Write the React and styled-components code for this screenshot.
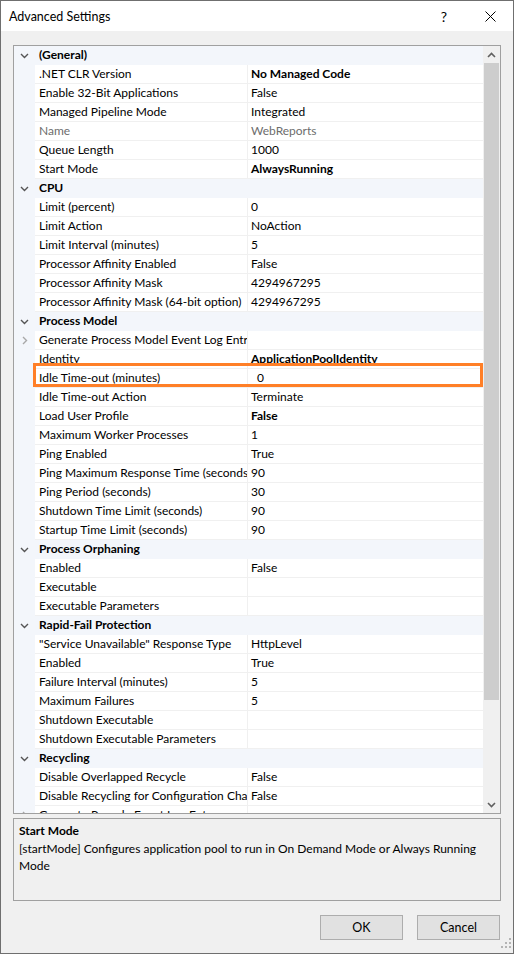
import React from "react";
import styled, { createGlobalStyle } from "styled-components";

const GlobalStyle = createGlobalStyle`
  body {
    margin: 0;
    background: #f0f0f0;
    font-family: Lato, "Noto Sans", sans-serif;
    font-size: 12px;
    color: #000;
  }
`;

const Window = styled.div`
  width: 514px;
  height: 954px;
  box-sizing: border-box;
  border: 1px solid #6f6f6f;
  background: #f0f0f0;
  display: flex;
  flex-direction: column;
  position: relative;
`;

const TitleBar = styled.div`
  height: 30px;
  background: #fff;
  display: flex;
  align-items: center;
  padding-left: 8px;
  font-size: 12.5px;
`;

const Title = styled.div`
  flex: 1;
`;

const TitleButton = styled.div`
  width: 46px;
  height: 30px;
  display: flex;
  align-items: center;
  justify-content: center;
  font-size: 14px;
`;

const Body = styled.div`
  flex: 1;
  display: flex;
  flex-direction: column;
  padding: 14px 12px 0 12px;
`;

const Grid = styled.div`
  height: 769px;
  box-sizing: border-box;
  border: 1px solid #a0a0a0;
  background: #fff;
  display: flex;
  position: relative;
`;

const List = styled.div`
  flex: 1;
  overflow: hidden;
`;

const Row = styled.div`
  height: 19px;
  display: grid;
  grid-template-columns: 21px 213px 1fr;
  background: ${(p) => (p.$category ? "#f3f6fb" : "#fff")};
`;

const Gutter = styled.div`
  background: #f3f6fb;
  display: flex;
  align-items: center;
  justify-content: center;
`;

const Name = styled.div`
  grid-column: ${(p) => (p.$category ? "2 / 4" : "auto")};
  padding-left: 4px;
  line-height: 18px;
  height: 19px;
  box-sizing: border-box;
  white-space: nowrap;
  overflow: hidden;
  font-weight: ${(p) => (p.$category ? 700 : 400)};
  color: ${(p) => (p.$disabled ? "#6d6d6d" : "#000")};
  border-bottom: ${(p) => (p.$category ? "0" : "1px solid #f0f0f0")};
  border-right: ${(p) => (p.$category ? "0" : "1px solid #f0f0f0")};
`;

const Value = styled.div`
  padding-left: ${(p) => (p.$editing ? "9px" : "3px")};
  line-height: 18px;
  height: 19px;
  box-sizing: border-box;
  white-space: nowrap;
  overflow: hidden;
  font-weight: ${(p) => (p.$bold ? 700 : 400)};
  color: ${(p) => (p.$disabled ? "#6d6d6d" : "#000")};
  border-bottom: 1px solid #f0f0f0;
`;

const Scrollbar = styled.div`
  width: 17px;
  background: #f0f0f0;
  display: flex;
  flex-direction: column;
`;

const ScrollArrow = styled.div`
  height: 17px;
  display: flex;
  align-items: center;
  justify-content: center;
`;

const Track = styled.div`
  flex: 1;
  padding: 0 1px;
`;

const Thumb = styled.div`
  height: 637px;
  background: #cdcdcd;
`;

const Highlight = styled.div`
  position: absolute;
  left: 19px;
  top: 317px;
  width: 444px;
  height: 18px;
  border: 3px solid #ff7f27;
  pointer-events: none;
`;

const Description = styled.div`
  margin-top: 4px;
  height: 83px;
  box-sizing: border-box;
  border: 1px solid #a0a0a0;
  padding: 3px 5px;
  line-height: 17px;
`;

const DescTitle = styled.div`
  font-weight: 700;
  margin-bottom: 1px;
`;

const Footer = styled.div`
  display: flex;
  justify-content: flex-end;
  gap: 14px;
  margin-top: 14px;
  padding-right: 1px;
`;

const Button = styled.button`
  width: 83px;
  height: 25px;
  box-sizing: border-box;
  border: 1px solid #adadad;
  background: #e1e1e1;
  font-family: inherit;
  font-size: 12.5px;
  color: #000;
  padding: 0;
`;

const Grip = styled.div`
  position: absolute;
  right: 2px;
  bottom: 2px;
`;

const Chevron = ({ dir }) => (
  <svg width="9" height="9" viewBox="0 0 9 9">
    <path
      d={dir === "down" ? "M1 3 L4.5 6.5 L8 3" : "M3 1 L6.5 4.5 L3 8"}
      fill="none"
      stroke={dir === "down" ? "#555" : "#a8a8a8"}
      strokeWidth="1.4"
    />
  </svg>
);

const rows = [
  { cat: "(General)" },
  { name: ".NET CLR Version", value: "No Managed Code", bold: true },
  { name: "Enable 32-Bit Applications", value: "False" },
  { name: "Managed Pipeline Mode", value: "Integrated" },
  { name: "Name", value: "WebReports", disabled: true },
  { name: "Queue Length", value: "1000" },
  { name: "Start Mode", value: "AlwaysRunning", bold: true },
  { cat: "CPU" },
  { name: "Limit (percent)", value: "0" },
  { name: "Limit Action", value: "NoAction" },
  { name: "Limit Interval (minutes)", value: "5" },
  { name: "Processor Affinity Enabled", value: "False" },
  { name: "Processor Affinity Mask", value: "4294967295" },
  { name: "Processor Affinity Mask (64-bit option)", value: "4294967295" },
  { cat: "Process Model" },
  { name: "Generate Process Model Event Log Entry", value: "", expand: true },
  { name: "Identity", value: "ApplicationPoolIdentity", bold: true },
  { name: "Idle Time-out (minutes)", value: "0", editing: true },
  { name: "Idle Time-out Action", value: "Terminate" },
  { name: "Load User Profile", value: "False", bold: true },
  { name: "Maximum Worker Processes", value: "1" },
  { name: "Ping Enabled", value: "True" },
  { name: "Ping Maximum Response Time (seconds)", value: "90" },
  { name: "Ping Period (seconds)", value: "30" },
  { name: "Shutdown Time Limit (seconds)", value: "90" },
  { name: "Startup Time Limit (seconds)", value: "90" },
  { cat: "Process Orphaning" },
  { name: "Enabled", value: "False" },
  { name: "Executable", value: "" },
  { name: "Executable Parameters", value: "" },
  { cat: "Rapid-Fail Protection" },
  { name: "\"Service Unavailable\" Response Type", value: "HttpLevel" },
  { name: "Enabled", value: "True" },
  { name: "Failure Interval (minutes)", value: "5" },
  { name: "Maximum Failures", value: "5" },
  { name: "Shutdown Executable", value: "" },
  { name: "Shutdown Executable Parameters", value: "" },
  { cat: "Recycling" },
  { name: "Disable Overlapped Recycle", value: "False" },
  { name: "Disable Recycling for Configuration Changes", value: "False" },
  { name: "Generate Recycle Event Log Entry", value: "", expand: true },
];

const App = () => {
  return (
    <>
      <GlobalStyle />
      <Window>
        <TitleBar>
          <Title>Advanced Settings</Title>
          <TitleButton>?</TitleButton>
          <TitleButton>
            <svg width="11" height="11" viewBox="0 0 11 11">
              <path d="M0.5 0.5 L10.5 10.5 M10.5 0.5 L0.5 10.5" stroke="#000" strokeWidth="1" />
            </svg>
          </TitleButton>
        </TitleBar>
        <Body>
          <Grid>
            <List>
              {rows.map((r, i) =>
                r.cat ? (
                  <Row key={i} $category>
                    <Gutter>
                      <Chevron dir="down" />
                    </Gutter>
                    <Name $category>{r.cat}</Name>
                  </Row>
                ) : (
                  <Row key={i}>
                    <Gutter>{r.expand && <Chevron dir="right" />}</Gutter>
                    <Name $disabled={r.disabled}>{r.name}</Name>
                    <Value $bold={r.bold} $disabled={r.disabled} $editing={r.editing}>
                      {r.value}
                    </Value>
                  </Row>
                )
              )}
            </List>
            <Scrollbar>
              <ScrollArrow>
                <svg width="9" height="6" viewBox="0 0 9 6">
                  <path d="M1 5 L4.5 1.5 L8 5" fill="none" stroke="#606060" strokeWidth="1.6" />
                </svg>
              </ScrollArrow>
              <Track>
                <Thumb />
              </Track>
              <ScrollArrow>
                <svg width="9" height="6" viewBox="0 0 9 6">
                  <path d="M1 1 L4.5 4.5 L8 1" fill="none" stroke="#606060" strokeWidth="1.6" />
                </svg>
              </ScrollArrow>
            </Scrollbar>
            <Highlight />
          </Grid>
          <Description>
            <DescTitle>Start Mode</DescTitle>
            [startMode] Configures application pool to run in On Demand Mode or Always Running
            Mode
          </Description>
          <Footer>
            <Button>OK</Button>
            <Button>Cancel</Button>
          </Footer>
        </Body>
        <Grip>
          <svg width="10" height="10" viewBox="0 0 10 10" fill="#b4b4b4">
            <rect x="8" y="0" width="2" height="2" />
            <rect x="4" y="4" width="2" height="2" />
            <rect x="8" y="4" width="2" height="2" />
            <rect x="0" y="8" width="2" height="2" />
            <rect x="4" y="8" width="2" height="2" />
            <rect x="8" y="8" width="2" height="2" />
          </svg>
        </Grip>
      </Window>
    </>
  );
};

export default App;
